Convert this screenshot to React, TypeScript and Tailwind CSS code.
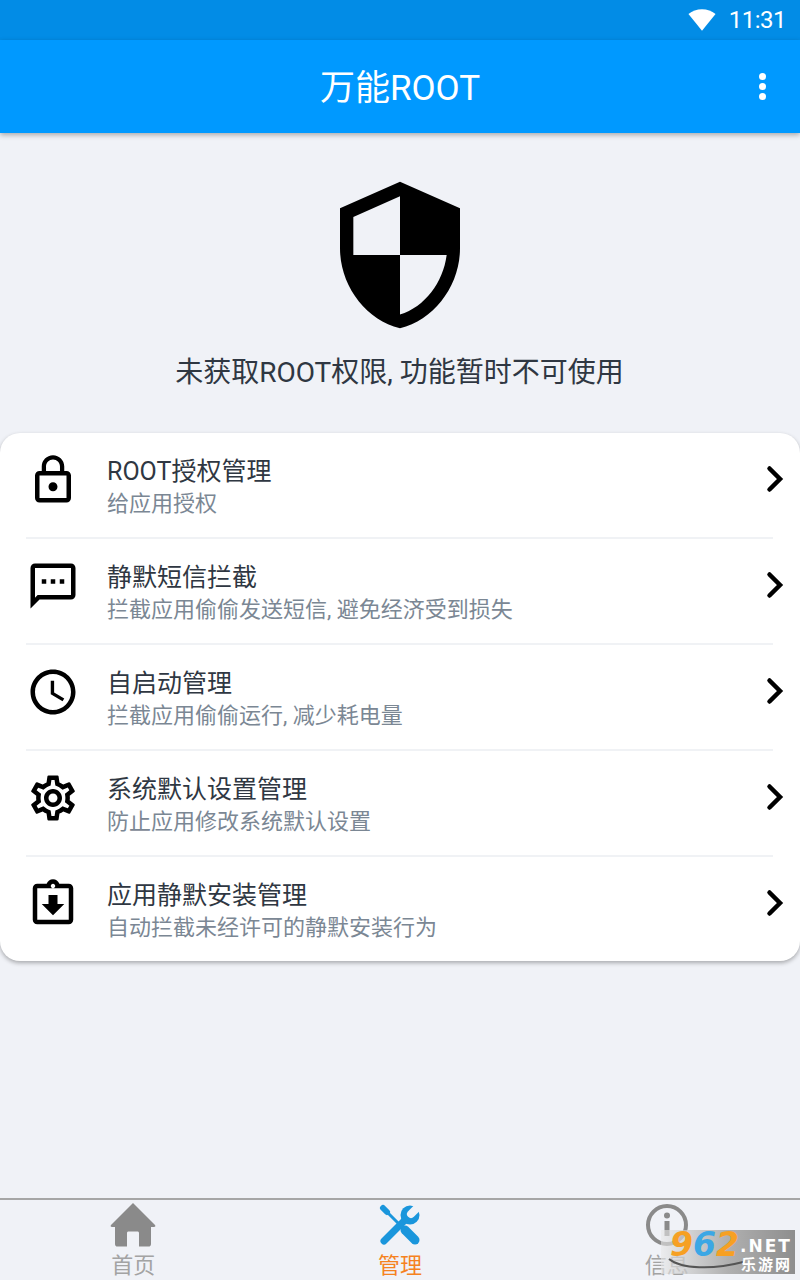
import React from 'react';
import { MdAccessTime, MdLockOutline, MdOutlineSettings, MdOutlineSms } from 'react-icons/md';

const font = '[font-family:Roboto,"Noto_Sans_CJK_SC",sans-serif]';

const rows = [
    { title: 'ROOT授权管理', sub: '给应用授权', icon: <MdLockOutline className="w-[54px] h-[54px]" /> },
    { title: '静默短信拦截', sub: '拦截应用偷偷发送短信, 避免经济受到损失', icon: <MdOutlineSms className="w-[54px] h-[54px]" /> },
    { title: '自启动管理', sub: '拦截应用偷偷运行, 减少耗电量', icon: <MdAccessTime className="w-[54px] h-[54px]" /> },
    { title: '系统默认设置管理', sub: '防止应用修改系统默认设置', icon: <MdOutlineSettings className="w-[54px] h-[54px]" /> },
    { title: '应用静默安装管理', sub: '自动拦截未经许可的静默安装行为', icon: <AssignIcon /> },
];

function AssignIcon() {
    return (
        <svg viewBox="0 0 24 24" className="w-[54px] h-[54px]" fill="currentColor">
            <path d="M19 3h-4.18C14.4 1.84 13.3 1 12 1s-2.4.84-2.82 2H5c-1.1 0-2 .9-2 2v14c0 1.1.9 2 2 2h14c1.1 0 2-.9 2-2V5c0-1.1-.9-2-2-2zm-7 0c.55 0 1 .45 1 1s-.45 1-1 1-1-.45-1-1 .45-1 1-1zm7 16H5V5h14v14z" />
            <path d="M10 8h4v4h3l-5 5-5-5h3z" />
        </svg>
    );
}

const Chevron = () => (
    <svg viewBox="0 0 18 28" className="w-[18px] h-[28px]" fill="none" stroke="#000" strokeWidth="4.5" strokeLinecap="round" strokeLinejoin="miter">
        <path d="M3.5 3.5 14 14 3.500 24.500" />
    </svg>
);

const App: React.FC = () => {
    return (
        <div className={`relative w-[800px] h-[1280px] overflow-hidden flex flex-col bg-[#f0f2f7] ${font}`}>
            {/* Status bar */}
            <div className="h-10 bg-[#028ce6] flex items-center justify-end pr-[14px] text-white">
                <svg viewBox="0 0 30 24" className="w-[28px] h-[24px] mr-[13px]" fill="#fff">
                    <path d="M15 23.500 .5 5.500C4.500 2.500 9.500.5 15 .5s10.500 2 14.500 5z" />
                </svg>
                <span className="text-[24px] leading-none tracking-[-0.5px]">11:31</span>
            </div>

            {/* App bar */}
            <div className="h-[93px] bg-[#0099ff] flex items-center justify-center relative shadow-[0_2px_5px_rgba(0,0,0,0.3)] text-white">
                <span className="text-[35px] leading-none pt-[3px]">万能ROOT</span>
                <div className="absolute left-[759px] top-[33px] flex flex-col gap-[3px]">
                    <span className="w-[7px] h-[7px] rounded-full bg-white" />
                    <span className="w-[7px] h-[7px] rounded-full bg-white" />
                    <span className="w-[7px] h-[7px] rounded-full bg-white" />
                </div>
            </div>

            {/* Shield */}
            <div className="flex flex-col items-center pt-[42px]">
                <svg viewBox="0 0 24 24" className="w-[160px] h-[160px]" fill="#000">
                    <path d="M12 1 3 5v6c0 5.550 3.840 10.740 9 12 5.160-1.260 9-6.450 9-12V5l-9-4zm0 10.990h7c-.53 4.120-3.280 7.790-7 8.940V12H5V6.300l7-3.110v8.800z" />
                </svg>
                <p className="text-[28px] leading-[40px] text-[#2f3742] mt-[18px] -ml-px">未获取ROOT权限, 功能暂时不可使用</p>
            </div>

            {/* Card */}
            <div className="mt-[40px] bg-white rounded-[20px] shadow-[0_2px_4px_rgba(0,0,0,0.3)]">
                {rows.map((row, i) => (
                    <div key={row.title} className={`flex items-center ml-[26px] mr-[27px] relative ${i < rows.length - 1 ? 'h-[106px] border-b-2 border-[#f0f2f5]' : 'h-[104px]'}`}>
                        <div className="w-[54px] h-[54px] text-black mb-[10px]">{row.icon}</div>
                        <div className="ml-[27px] flex-1 flex flex-col pt-px">
                            <span className="text-[25px] leading-[37px] text-[#2f3742]">{row.title}</span>
                            <span className="text-[22px] leading-[28px] text-[#7b8794]">{row.sub}</span>
                        </div>
                        <div className="mr-[-11px] mb-[12px]"><Chevron /></div>
                    </div>
                ))}
            </div>

            {/* Bottom nav */}
            <div className="mt-auto h-[82px] border-t-2 border-[#a6a6a6] grid grid-cols-3">
                <div className="flex flex-col items-center">
                    <svg viewBox="0 0 46 46" className="w-[46px] h-[46px] mt-[2px]" fill="#8a8a8a">
                        <path d="M23 1 45 23c.8 1 .2 2-1 2h-3v17c0 1.600-1 2.600-2.600 2.600H29V31c0-1-.6-1.600-1.600-1.600h-8.800c-1 0-1.600.6-1.600 1.600v13.600H7.600C6 44.600 5 43.600 5 42V25H2c-1.200 0-1.800-1-1-2z" />
                    </svg>
                    <span className="text-[22px] leading-[28px] text-[#a3a3a3] mt-[4px]">首页</span>
                </div>
                <div className="flex flex-col items-center">
                    <svg viewBox="0 0 42 42" className="w-[42px] h-[42px] mt-[4px]" fill="none">
                        <path d="M4 4 8 8" stroke="#1a96dc" strokeWidth="6" strokeLinecap="round" />
                        <path d="M6 6 22 22" stroke="#1a96dc" strokeWidth="3" />
                        <path d="M26 26 36 36" stroke="#1a96dc" strokeWidth="9" strokeLinecap="round" />
                        <path d="M5 37 26 16" stroke="#1a96dc" strokeWidth="7" strokeLinecap="round" />
                        <circle cx="31" cy="11" r="9.500" fill="#1a96dc" />
                        <path d="M32 10 44 -2" stroke="#f0f2f7" strokeWidth="8" strokeLinecap="round" />
                    </svg>
                    <span className="text-[22px] leading-[28px] text-[#f5821f] mt-[6px]">管理</span>
                </div>
                <div className="flex flex-col items-center">
                    <svg viewBox="0 0 46 46" className="w-[46px] h-[46px] mt-[2px]" fill="none">
                        <circle cx="23" cy="23" r="19" stroke="#8a8a8a" strokeWidth="4" />
                        <circle cx="23" cy="13.500" r="3" fill="#8a8a8a" />
                        <rect x="20.500" y="19" width="5" height="15" fill="#8a8a8a" />
                    </svg>
                    <span className="text-[22px] leading-[28px] text-[#a3a3a3] mt-[4px]">信息</span>
                </div>
            </div>

            {/* Watermark */}
            <div className="absolute left-[661px] top-[1230px] w-[134px] h-[44px] bg-gradient-to-r from-[#e8e8e8]/60 via-[#b0b0b0] to-[#8e8e8e]">
                <svg viewBox="0 0 80 14" className="absolute left-[6px] top-[28px] w-[80px] h-[14px]" fill="none">
                    <path d="M2 1C14 11 46 12 76 4" stroke="#555" strokeWidth="2" />
                </svg>
                <div className="absolute left-[9px] top-[2px] flex italic font-bold text-[33px] leading-[26px] [font-family:'DejaVu_Sans',sans-serif]">
                    <span className="text-[#f6a023]">9</span>
                    <span className="text-[#3ba7e5]">6</span>
                    <span className="text-[#f6a023]">2</span>
                </div>
                <span className="absolute left-[79px] top-[7px] text-white font-bold text-[17px] leading-[18px] tracking-[2px] [font-family:'DejaVu_Sans',sans-serif]">.NET</span>
                <span className="absolute left-[80px] top-[26px] text-white font-bold text-[15px] leading-[18px] tracking-[2px]">乐游网</span>
            </div>
        </div>
    );
};

export default App;
